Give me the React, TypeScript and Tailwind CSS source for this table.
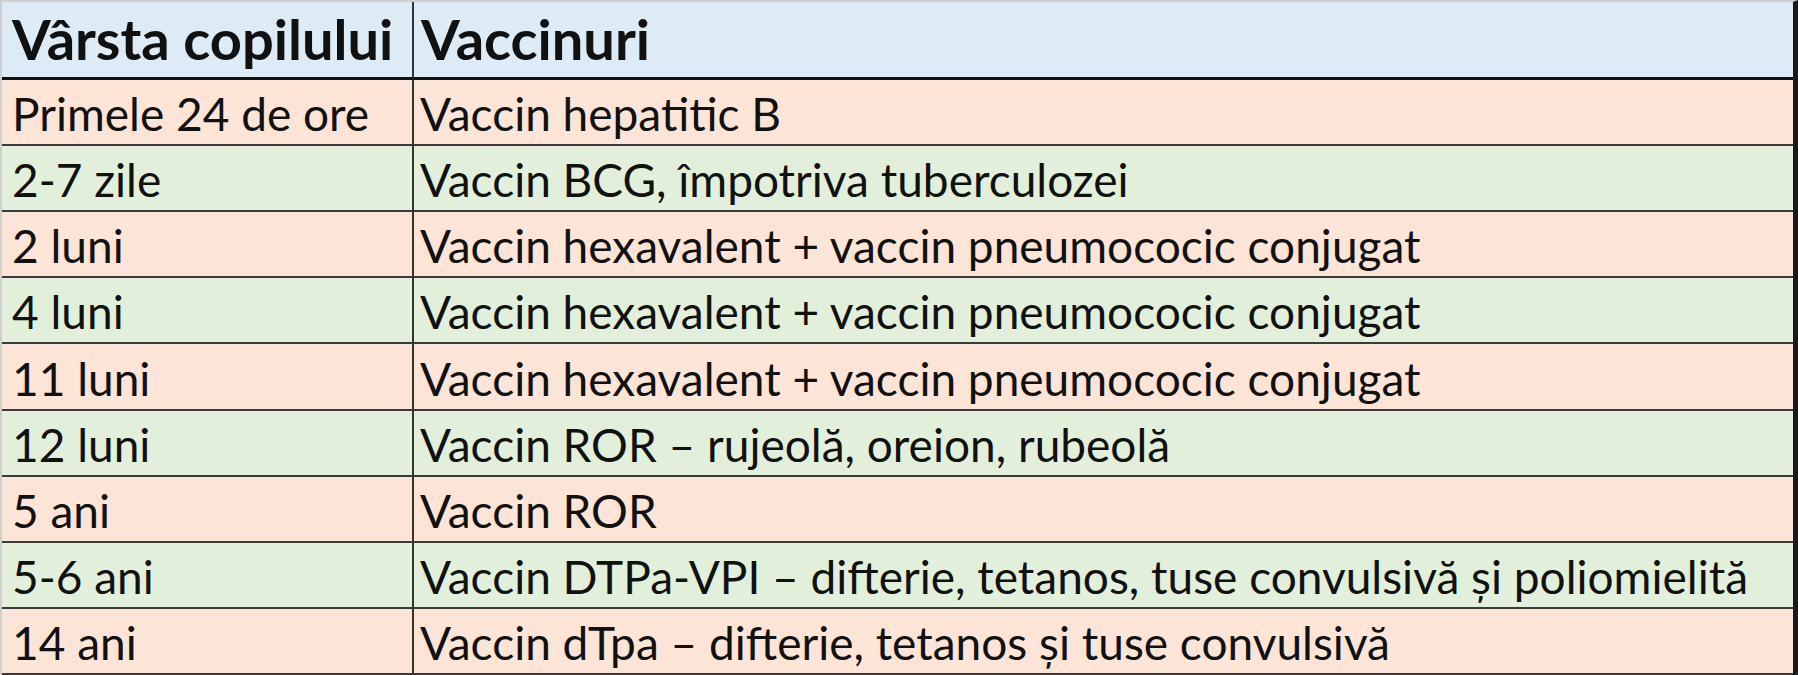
const rows: [string, string][] = [
  ["Primele 24 de ore", "Vaccin hepatitic B"],
  ["2-7 zile", "Vaccin BCG, împotriva tuberculozei"],
  ["2 luni", "Vaccin hexavalent + vaccin pneumococic conjugat"],
  ["4 luni", "Vaccin hexavalent + vaccin pneumococic conjugat"],
  ["11 luni", "Vaccin hexavalent + vaccin pneumococic conjugat"],
  ["12 luni", "Vaccin ROR – rujeolă, oreion, rubeolă"],
  ["5 ani", "Vaccin ROR"],
  ["5-6 ani", "Vaccin DTPa-VPI – difterie, tetanos, tuse convulsivă și poliomielită"],
  ["14 ani", "Vaccin dTpa – difterie, tetanos și tuse convulsivă"],
];

const App = () => {
  return (
    <div
      className="w-[1798px] h-[675px] overflow-hidden bg-white text-[#111]"
      style={{ fontFamily: "Lato, 'Open Sans', sans-serif" }}
    >
      <div className="grid h-full grid-cols-[412px_1fr] grid-rows-[78px_repeat(9,1fr)] border-t-2 border-l-2 border-t-[#cfcfcf] border-l-[#cfcfcf] border-r-[5px] border-r-[#1a1a1a]">
        <div className="flex items-end border-b-[3px] border-r-2 border-b-[#111] border-r-[#333] bg-[#ddebf7] pl-[10px] pb-[10px] text-[56px] font-bold leading-none whitespace-nowrap">
          Vârsta copilului
        </div>
        <div className="flex items-end border-b-[3px] border-b-[#111] bg-[#ddebf7] pl-[7px] pb-[10px] text-[56px] font-bold leading-none">
          Vaccinuri
        </div>
        {rows.map(([age, vaccine], i) => {
          const bg = i % 2 === 0 ? "bg-[#fce4d6]" : "bg-[#e2efda]";
          return (
            <div key={i} className="contents">
              <div className={`flex items-end border-b-2 border-r-2 border-b-[#3b3b3b] border-r-[#333] pl-[10px] pb-[7px] text-[46px] leading-none ${bg}`}>
                {age}
              </div>
              <div className={`flex items-end border-b-2 border-b-[#3b3b3b] pl-[6px] pb-[7px] text-[46px] leading-none whitespace-nowrap ${bg}`}>
                {vaccine}
              </div>
            </div>
          );
        })}
      </div>
    </div>
  );
};

export default App;
